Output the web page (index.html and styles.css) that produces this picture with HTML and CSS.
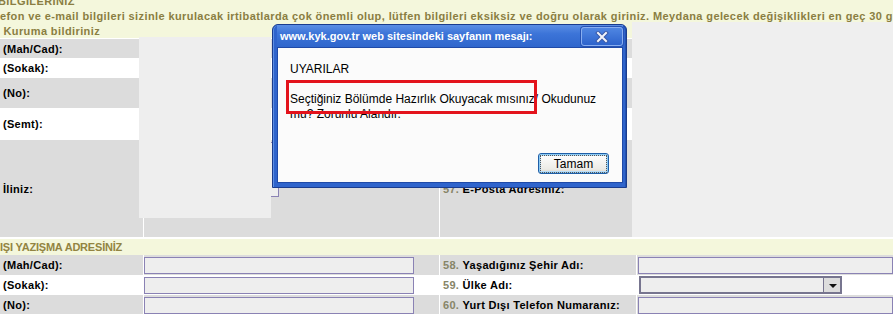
FILE: index.html
```html
<!DOCTYPE html>
<html>
<head>
    <title>Yazışma Adresi</title>
    <link rel="stylesheet" href="styles.css">
</head>
<body>
    <div class="page">
        <div class="notice">
            <div class="notice-text">
                <div class="first">BİLGİLERİNİZ</div>
                <div>efon ve e-mail bilgileri sizinle kurulacak irtibatlarda çok önemli olup, lütfen bilgileri eksiksiz ve doğru olarak giriniz. Meydana gelecek değişiklikleri en geç 30 gün içinde</div>
                <div>&nbsp;Kuruma bildiriniz</div>
            </div>
        </div>

        <div class="form upper">
            <div class="cell label gray">(Mah/Cad):</div>
            <div class="cell gray"></div>
            <div class="cell gray"></div>
            <div class="cell gray"></div>

            <div class="cell label">(Sokak):</div>
            <div class="cell"></div>
            <div class="cell"></div>
            <div class="cell"></div>

            <div class="cell label gray">(No):</div>
            <div class="cell gray"></div>
            <div class="cell gray"></div>
            <div class="cell gray"></div>

            <div class="cell label">(Semt):</div>
            <div class="cell"></div>
            <div class="cell"></div>
            <div class="cell"></div>

            <div class="cell label gray">İliniz:</div>
            <div class="cell gray top"><div class="textarea"></div></div>
            <div class="cell label gray"><span class="num">57.</span>&nbsp;E-Posta Adresiniz:</div>
            <div class="cell gray"></div>
        </div>

        <div class="section-title">IŞI YAZIŞMA ADRESİNİZ</div>

        <div class="form lower">
            <div class="cell label gray">(Mah/Cad):</div>
            <div class="cell gray"><div class="input"></div></div>
            <div class="cell label gray"><span class="num">58.</span>&nbsp;Yaşadığınız Şehir Adı:</div>
            <div class="cell gray"><div class="input wide"></div></div>

            <div class="cell label">(Sokak):</div>
            <div class="cell"><div class="input"></div></div>
            <div class="cell label"><span class="num">59.</span>&nbsp;Ülke Adı:</div>
            <div class="cell">
                <div class="select"><span class="arrow"></span></div>
            </div>

            <div class="cell label gray">(No):</div>
            <div class="cell gray"><div class="input"></div></div>
            <div class="cell label gray"><span class="num">60.</span>&nbsp;Yurt Dışı Telefon Numaranız:</div>
            <div class="cell gray"><div class="input wide"></div></div>
        </div>

        <!-- unpainted areas behind the alert -->
        <div class="blank blank-left"></div>
        <div class="blank blank-right"></div>

        <div class="dialog">
            <div class="dialog-title">
                <span>www.kyk.gov.tr web sitesindeki sayfanın mesajı:</span>
                <div class="close">
                    <svg width="14" height="12" viewBox="0 0 14 12">
                        <path d="M3 2 L11 10 M11 2 L3 10" stroke="#3a5aa8" stroke-width="4" stroke-linecap="square"/>
                        <path d="M3 2 L11 10 M11 2 L3 10" stroke="#f2f4fa" stroke-width="2" stroke-linecap="square"/>
                    </svg>
                </div>
            </div>
            <div class="dialog-body">
                <div class="message">
                    UYARILAR<br><br>
                    Seçtiğiniz Bölümde Hazırlık Okuyacak mısınız/ Okudunuz<br>
                    mu? Zorunlu Alandır.
                </div>
                <div class="buttons">
                    <div class="button"><span>Tamam</span></div>
                </div>
            </div>
        </div>

        <div class="highlight"></div>
    </div>
</body>
</html>
```

FILE: styles.css
```css
html, body {
    margin: 0;
    padding: 0;
    overflow: hidden;
    background-color: white;
}
.page {
    position: relative;
    width: 893px;
    height: 314px;
    overflow: hidden;
    font-family: "Liberation Sans", Arial, sans-serif;
}
.notice {
    height: 38px;
    overflow: hidden;
    background-color: #f4f7dc;
    color: #8a7e42;
    font-size: 11px;
    font-weight: bold;
    line-height: 15px;
    letter-spacing: 0.4px;
    white-space: nowrap;
}
.notice-text {
    margin-top: -6px;
}
.notice-text .first {
    margin-left: -2px;
}
.form {
    display: grid;
    grid-template-columns: 143px 295px 196px 1fr;
    column-gap: 1px;
    background-color: white;
}
.upper {
    margin-top: 1px;
    grid-template-rows: 19px 20px 30px 32px 97px;
}
.lower {
    grid-template-rows: 20px 20px 20px;
}
.cell {
    display: flex;
    align-items: center;
    background-color: white;
    min-width: 0;
}
.cell.gray {
    background-color: #dcdcdc;
}
.cell.top {
    align-items: flex-start;
}
.label {
    padding-left: 3px;
    font-size: 11px;
    font-weight: bold;
    letter-spacing: 0.3px;
    color: #000;
    white-space: nowrap;
}
.num {
    color: #878568;
}
.textarea {
    width: 133px;
    height: 53px;
    margin-top: 2px;
    border: 1px solid #8a82b4;
    background-color: #eeeeee;
}
.section-title {
    margin-top: 2px;
    height: 16px;
    line-height: 17px;
    background-color: #f4f7dc;
    color: #928442;
    font-size: 11px;
    font-weight: bold;
    letter-spacing: -0.2px;
    white-space: nowrap;
}
.input {
    width: 268px;
    height: 15px;
    border: 1px solid #8a82b4;
    background-color: #eeeeee;
}
.input.wide {
    width: 300px;
    margin-left: 1px;
}
.select {
    display: flex;
    justify-content: flex-end;
    align-items: center;
    width: 199px;
    height: 14px;
    margin-left: 2px;
    border: 2px solid #77758f;
    background-color: #eeeeee;
}
.arrow {
    width: 16px;
    height: 14px;
    border-left: 1px solid #77758f;
    background-color: #dddddd;
    position: relative;
}
.arrow::after {
    content: "";
    position: absolute;
    left: 5px;
    top: 6px;
    border-left: 4px solid transparent;
    border-right: 4px solid transparent;
    border-top: 4px solid #111;
}
.blank {
    position: absolute;
    background-color: #eeeeee;
}
.blank-left {
    left: 139px;
    top: 37px;
    width: 132px;
    height: 181px;
}
.blank-right {
    left: 632px;
    top: 22px;
    width: 261px;
    height: 215px;
    background-color: #efefef;
}
.dialog {
    position: absolute;
    left: 272px;
    top: 24px;
    width: 355px;
    height: 164px;
    box-sizing: border-box;
    display: flex;
    flex-direction: column;
    padding: 0 3px 4px 4px;
    background-color: #2f64cc;
    border: 1px solid #1a3c8e;
    border-radius: 6px 6px 0 0;
    box-shadow: inset 1px 0 0 #5d8fe4, inset -1px 0 0 #2352b0;
}
.dialog-title {
    height: 22px;
    display: flex;
    align-items: center;
    justify-content: space-between;
    padding-left: 3px;
    background: linear-gradient(#5b8ee4, #3c74d8 40%, #2f66cc);
    color: white;
    font-size: 11px;
    font-weight: bold;
    white-space: nowrap;
}
.close {
    width: 40px;
    height: 17px;
    margin-top: 1px;
    display: flex;
    align-items: center;
    justify-content: center;
    border: 1px solid #88aef0;
    border-radius: 3px;
    background: linear-gradient(#4f86e2, #2d63cc);
    box-shadow: 0 0 0 1px #2552b4;
}
.dialog-body {
    flex: 1;
    display: flex;
    flex-direction: column;
    justify-content: space-between;
    background-color: #fbfbfb;
    border: 1px solid #1f4aa8;
}
.message {
    padding: 14px 0 0 12px;
    font-size: 12px;
    line-height: 15px;
    color: #000;
    white-space: nowrap;
}
.buttons {
    display: flex;
    justify-content: flex-end;
    padding: 0 13px 8px 0;
}
.button {
    width: 69px;
    height: 19px;
    display: flex;
    align-items: center;
    justify-content: center;
    border: 1px solid #1f5fa8;
    border-radius: 3px;
    background: linear-gradient(#ffffff, #ecebe6 80%, #d6d0c5);
    box-shadow: inset 0 0 0 1px #8ccaf2, inset 0 0 0 2px #b8dcf6;
    font-size: 12px;
    color: #000;
}
.button span {
    padding: 0 12px;
    outline: 1px dotted #555;
    outline-offset: 1px;
    line-height: 14px;
}
.highlight {
    position: absolute;
    left: 286px;
    top: 80px;
    width: 245px;
    height: 28px;
    border: 3px solid #e3131c;
}
```
